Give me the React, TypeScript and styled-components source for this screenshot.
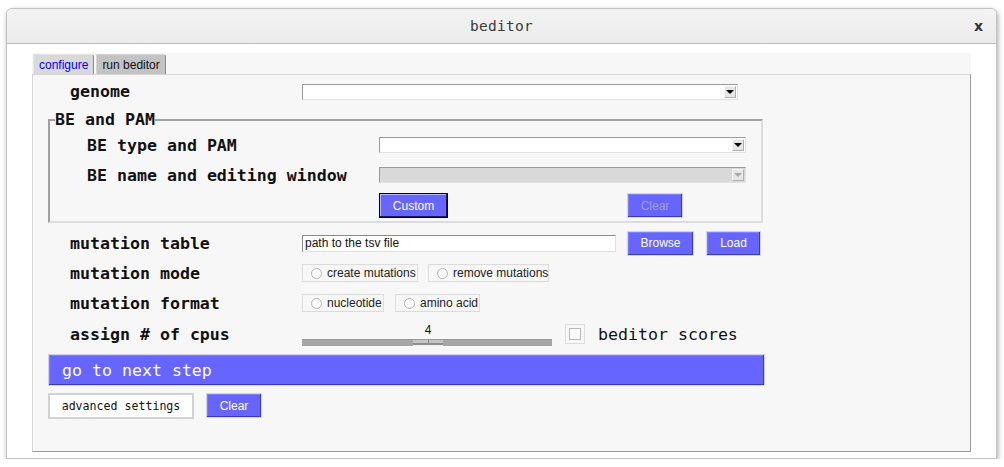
import React from "react";
import styled, { createGlobalStyle } from "styled-components";

const Global = createGlobalStyle`
  html, body { margin: 0; padding: 0; background: #ffffff; }
  * { box-sizing: border-box; }
`;

const MONO = `"DejaVu Sans Mono", "Liberation Mono", monospace`;
const SANS = `"Liberation Sans", Arial, sans-serif`;
const BLUE = "#6666ff";

const Window = styled.div`
  margin: 8px 0 0 6px;
  width: 991px;
  height: 451px;
  display: flex;
  flex-direction: column;
  background: #ffffff;
  border: 1px solid #c4c4c4;
  border-radius: 6px 6px 0 0;
  box-shadow: 1px 2px 5px rgba(0, 0, 0, 0.35);
`;

const TitleBar = styled.div`
  height: 35px;
  flex: none;
  display: grid;
  grid-template-columns: 1fr auto 1fr;
  align-items: center;
  background: linear-gradient(#f3f3f3, #ebebeb);
  border-bottom: 1px solid #bcbcbc;
  border-radius: 6px 6px 0 0;
`;

const Title = styled.div`
  grid-column: 2;
  font-family: ${MONO};
  font-size: 14.5px;
  color: #3a3a3a;
  letter-spacing: 0.3px;
`;

const Close = styled.div`
  grid-column: 3;
  justify-self: end;
  margin-right: 13px;
  font-family: "DejaVu Sans", sans-serif;
  font-weight: bold;
  font-size: 14px;
  color: #333;
  line-height: 1;
`;

const Body = styled.div`
  flex: 1;
  padding: 9px 25px 6px 25px;
  display: flex;
`;

const Notebook = styled.div`
  flex: 1;
  display: flex;
  flex-direction: column;
  background: #f7f7f7;
`;

const TabStrip = styled.div`
  height: 21px;
  flex: none;
  display: flex;
  align-items: flex-end;
  padding-left: 1px;
  gap: 2px;
  background: #f7f7f7;
`;

const Tab = styled.div<{ $active?: boolean }>`
  height: 20px;
  padding: 0 5px;
  display: flex;
  align-items: center;
  font-family: ${SANS};
  font-size: 12px;
  color: ${(p) => (p.$active ? "#0000ff" : "#111")};
  background: ${(p) => (p.$active ? "#d9d9d9" : "#c3c3c3")};
  border: 1px solid ${(p) => (p.$active ? "#e4e4e4" : "#d6d6d6")};
  border-right-color: #8a8a8a;
  border-bottom: none;
  border-radius: 0 3px 0 0;
`;

const Panel = styled.div`
  flex: 1;
  background: #f7f7f7;
  border: 1px solid #9a9a9a;
  border-top-color: #d6d6d6;
  border-left-color: #d6d6d6;
  padding: 7px 0 0 15px;
`;

const Form = styled.div`
  width: 717px;
  display: flex;
  flex-direction: column;
`;

const Row = styled.div<{ $h: number; $label?: number; $mt?: number }>`
  height: ${(p) => p.$h}px;
  margin-top: ${(p) => p.$mt ?? 0}px;
  display: grid;
  grid-template-columns: ${(p) => p.$label ?? 254}px auto;
  align-items: center;
`;

const Label = styled.div<{ $indent?: number }>`
  padding-left: ${(p) => p.$indent ?? 22}px;
  font-family: ${MONO};
  font-weight: bold;
  font-size: 16.6px;
  color: #111;
  white-space: pre;
`;

const Select = styled.div<{ $w: number; $disabled?: boolean }>`
  width: ${(p) => p.$w}px;
  height: 16px;
  display: flex;
  justify-content: flex-end;
  align-items: center;
  padding-right: 1px;
  background: ${(p) => (p.$disabled ? "#d9d9d9" : "#ffffff")};
  border: 1px solid #e2e2e2;
  border-top-color: #9a9a9a;
  border-left-color: #9a9a9a;
`;

const Arrow = styled.div<{ $disabled?: boolean }>`
  width: 12px;
  height: 12px;
  display: flex;
  align-items: center;
  justify-content: center;
  background: #e6e6e6;
  border: 1px solid #f4f4f4;
  border-right-color: #b0b0b0;
  border-bottom-color: #b0b0b0;
  &::after {
    content: "";
    border-left: 4px solid transparent;
    border-right: 4px solid transparent;
    border-top: 4px solid ${(p) => (p.$disabled ? "#a8a8a8" : "#000")};
  }
`;

const Fieldset = styled.fieldset`
  margin: 10px 0 0 0;
  padding: 0 0 3px 0;
  width: 715px;
  border: 2px solid #dcdcdc;
  border-top-color: #a0a0a0;
  border-left-color: #a0a0a0;
  min-inline-size: 0;
`;

const Legend = styled.legend`
  margin-left: 5px;
  padding: 0;
  font-family: ${MONO};
  font-weight: bold;
  font-size: 16.6px;
  line-height: 21px;
  color: #111;
`;

const Buttons = styled.div<{ $gap: number }>`
  display: flex;
  align-items: center;
  gap: ${(p) => p.$gap}px;
`;

const Button = styled.button<{ $w: number; $h?: number; $focus?: boolean; $disabled?: boolean }>`
  width: ${(p) => p.$w}px;
  height: ${(p) => p.$h ?? 25}px;
  padding: 0;
  font-family: ${SANS};
  font-size: 12px;
  color: ${(p) => (p.$disabled ? "#a0a0cc" : "#ffffff")};
  background: ${BLUE};
  border: 1px solid ${(p) => (p.$focus ? "#000" : "#d4d4d4")};
  box-shadow: inset -1px -1px 0 ${(p) => (p.$focus ? "#1a1a66" : "#3c3cae")},
    inset 1px 1px 0 ${(p) => (p.$focus ? "#b8b8ff" : "#8080ff")};
`;

const Entry = styled.div`
  width: 314px;
  height: 17px;
  padding: 0 2px;
  display: flex;
  align-items: center;
  background: #ffffff;
  border: 1px solid #e0e0e0;
  border-top-color: #8a8a8a;
  border-left-color: #8a8a8a;
  font-family: ${SANS};
  font-size: 12px;
  color: #111;
`;

const Radio = styled.div<{ $w: number }>`
  width: ${(p) => p.$w}px;
  height: 18px;
  display: flex;
  align-items: center;
  gap: 5px;
  padding-left: 8px;
  border: 1px solid #dcdcdc;
  font-family: ${SANS};
  font-size: 12px;
  color: #222;
  white-space: nowrap;
  &::before {
    content: "";
    flex: none;
    width: 9px;
    height: 9px;
    border-radius: 50%;
    border: 1px solid #b4b4b4;
    background: #fbfbfb;
  }
`;

const Slider = styled.div`
  align-self: start;
  margin-top: 5px;
  width: 250px;
  display: flex;
  flex-direction: column;
`;

const SliderValue = styled.div`
  height: 14px;
  line-height: 15px;
  text-align: center;
  padding-left: 2px;
  font-family: ${SANS};
  font-size: 12px;
  color: #111;
`;

const Trough = styled.div`
  margin-top: 2px;
  height: 7px;
  background: #a6a6a6;
  border-top: 1px solid #9a9a9a;
  display: flex;
  justify-content: center;
  padding-left: 2px;
`;

const Thumb = styled.div`
  width: 30px;
  height: 6px;
  background: linear-gradient(90deg, #c4c4c4 49%, #888 49%, #888 53%, #c4c4c4 53%);
  border-bottom: 1px solid #f0f0f0;
  box-shadow: inset 0 -2px 0 #8e8e8e;
`;

const CpuControls = styled.div`
  height: 32px;
  display: flex;
  align-items: center;
`;

const Check = styled.div`
  margin-left: 13px;
  width: 20px;
  height: 20px;
  display: flex;
  align-items: center;
  justify-content: center;
  border: 1px solid #dcdcdc;
  &::after {
    content: "";
    width: 10px;
    height: 10px;
    border: 1px solid #b8b8b8;
    background: #fafafa;
  }
`;

const CheckText = styled.div`
  margin-left: 13px;
  font-family: ${MONO};
  font-size: 16.6px;
  color: #111;
`;

const NextBar = styled.div`
  margin-top: 4px;
  height: 32px;
  display: flex;
  align-items: center;
  padding-left: 13px;
  background: ${BLUE};
  border: 1px solid #d0d0ee;
  box-shadow: inset -1px -1px 0 #3c3cae, inset 1px 1px 0 #8080ff;
  font-family: ${MONO};
  font-size: 16.6px;
  color: #ffffff;
`;

const BottomRow = styled.div`
  margin-top: 7px;
  display: flex;
  align-items: flex-start;
  gap: 12px;
`;

const PlainButton = styled.button`
  width: 146px;
  height: 26px;
  padding: 0;
  background: #ffffff;
  border: 2px solid #d2d2d2;
  font-family: ${MONO};
  font-size: 11.6px;
  color: #111;
`;

export default function App() {
  return (
    <>
      <Global />
      <Window>
        <TitleBar>
          <Title>beditor</Title>
          <Close>x</Close>
        </TitleBar>
        <Body>
          <Notebook>
            <TabStrip>
              <Tab $active>configure</Tab>
              <Tab>run beditor</Tab>
            </TabStrip>
            <Panel>
              <Form>
                <Row $h={17}>
                  <Label>genome</Label>
                  <Select $w={436}>
                    <Arrow />
                  </Select>
                </Row>

                <Fieldset>
                  <Legend>BE and PAM</Legend>
                  <Row $h={30} $label={329}>
                    <Label $indent={37}>BE type and PAM</Label>
                    <Select $w={367}>
                      <Arrow />
                    </Select>
                  </Row>
                  <Row $h={30} $label={329}>
                    <Label $indent={37}>BE name and editing window</Label>
                    <Select $w={367} $disabled>
                      <Arrow $disabled />
                    </Select>
                  </Row>
                  <Row $h={25} $mt={3} $label={329}>
                    <span />
                    <Buttons $gap={179}>
                      <Button $w={69} $focus>Custom</Button>
                      <Button $w={56} $disabled>Clear</Button>
                    </Buttons>
                  </Row>
                </Fieldset>

                <Row $h={30} $mt={5}>
                  <Label>mutation table</Label>
                  <Buttons $gap={11}>
                    <Entry>path to the tsv file</Entry>
                    <Buttons $gap={12}>
                      <Button $w={67}>Browse</Button>
                      <Button $w={55}>Load</Button>
                    </Buttons>
                  </Buttons>
                </Row>
                <Row $h={30}>
                  <Label>mutation mode</Label>
                  <Buttons $gap={10}>
                    <Radio $w={116}>create mutations</Radio>
                    <Radio $w={121}>remove mutations</Radio>
                  </Buttons>
                </Row>
                <Row $h={30}>
                  <Label>mutation format</Label>
                  <Buttons $gap={11}>
                    <Radio $w={82}>nucleotide</Radio>
                    <Radio $w={85}>amino acid</Radio>
                  </Buttons>
                </Row>
                <Row $h={32}>
                  <Label>assign # of cpus</Label>
                  <CpuControls>
                    <Slider>
                      <SliderValue>4</SliderValue>
                      <Trough>
                        <Thumb />
                      </Trough>
                    </Slider>
                    <Check />
                    <CheckText>beditor scores</CheckText>
                  </CpuControls>
                </Row>

                <NextBar>go to next step</NextBar>
                <BottomRow>
                  <PlainButton>advanced settings</PlainButton>
                  <Button $w={56}>Clear</Button>
                </BottomRow>
              </Form>
            </Panel>
          </Notebook>
        </Body>
      </Window>
    </>
  );
}
